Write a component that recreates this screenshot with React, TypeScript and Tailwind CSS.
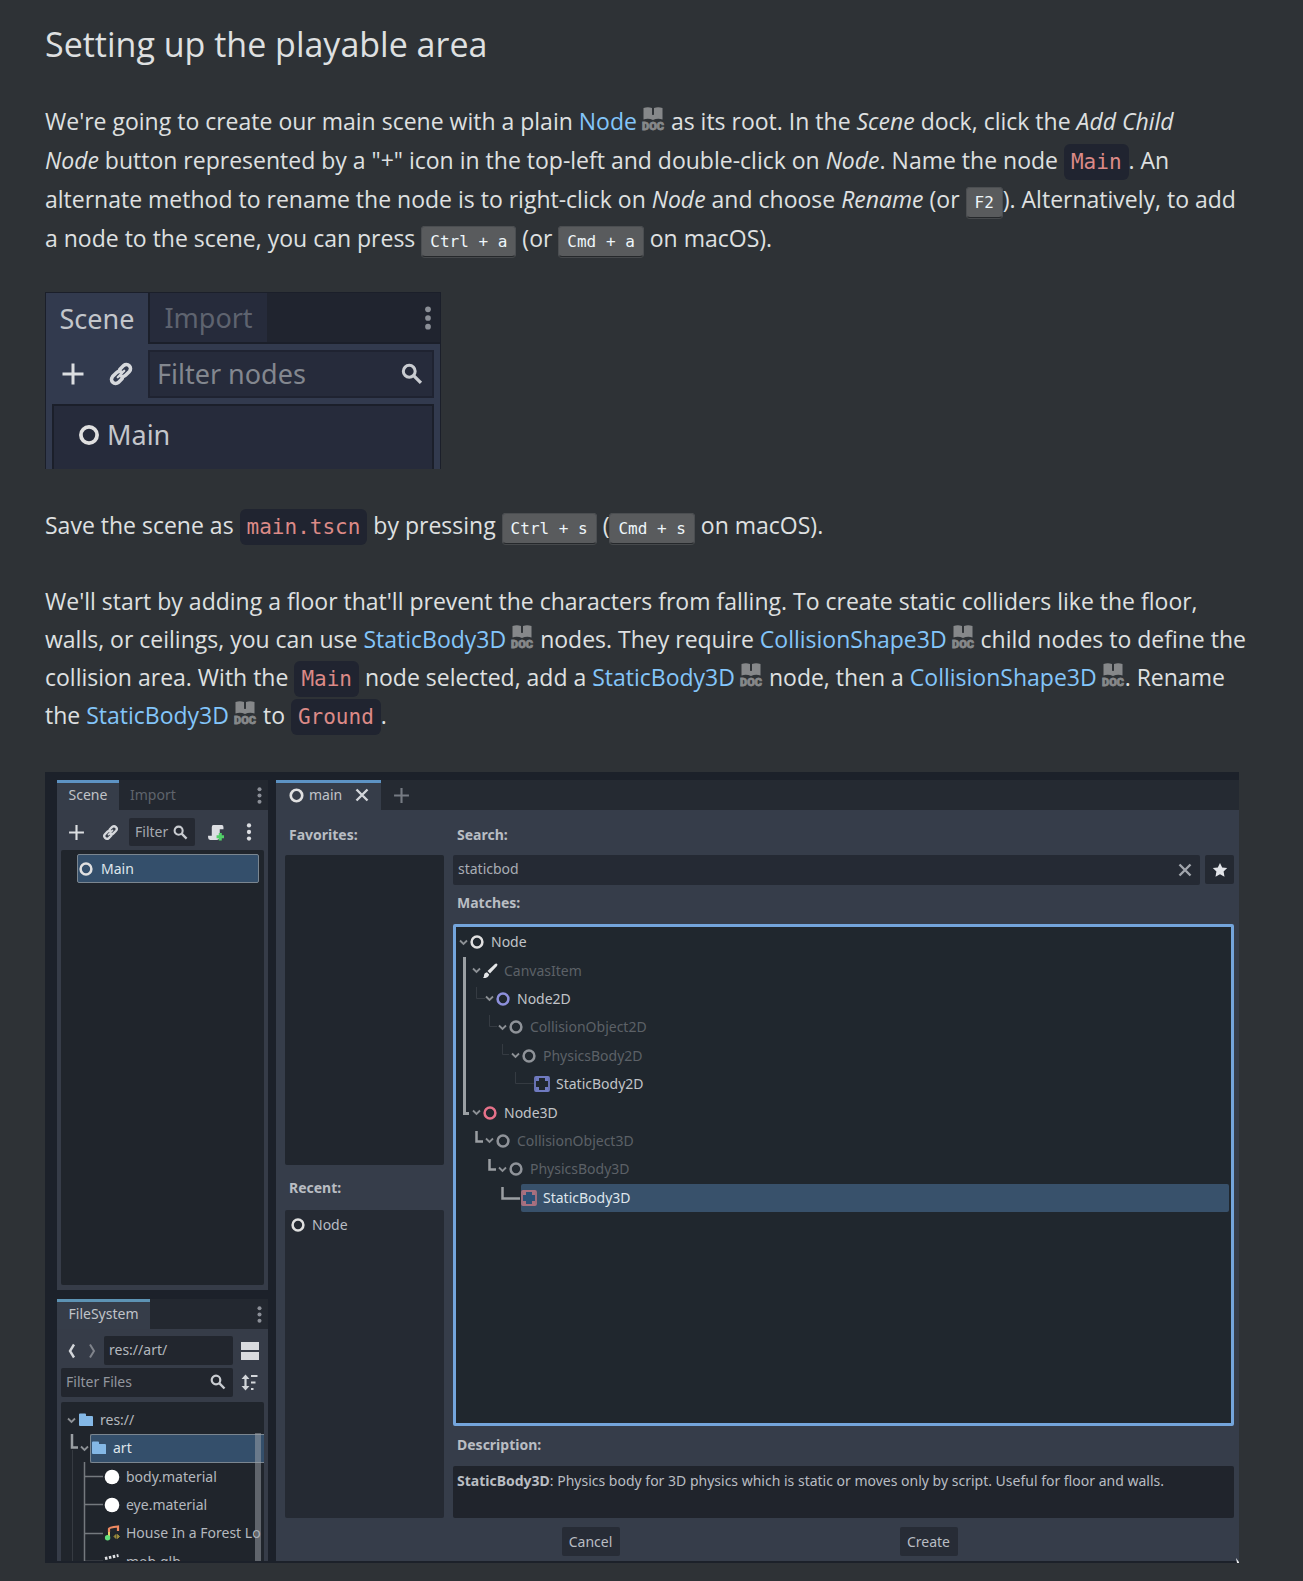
import React from "react";

const ui = 'font-["Noto_Sans","Open_Sans",sans-serif]';

function DocLink({ children }: { children: string }) {
  return (
    <a href="#" className="whitespace-nowrap text-[#83c5fa]">
      {children}
      <svg className="ml-1 inline-block h-[23px] w-[24px] overflow-visible align-baseline" viewBox="0 0 24 23" fill="#86888a" aria-hidden="true">
        <path d="M2.500 1Q7-.6 11 1V7.500Q12 8.500 13 7.500V1Q17-.6 21.500 1V12.500Q16.500 11 12 13Q7.500 11 2.500 12.500Z" />
        <text x="12" y="22.500" textAnchor="middle" fontSize="11" fontWeight="900" stroke="#86888a" strokeWidth=".8" className="font-[Roboto,sans-serif]">DOC</text>
      </svg>
    </a>
  );
}

function Code({ children }: { children: string }) {
  return (
    <code className='rounded-[6px] bg-[#202430] px-[7px] py-[6px] font-["DejaVu_Sans_Mono",monospace] text-[21px] leading-[20px] text-[#dc8a87]'>
      {children}
    </code>
  );
}

function Key({ children }: { children: string }) {
  return (
    <kbd className='rounded-[4px] border border-[#4b4e51] border-b-[#25282b] bg-[#595b5d] px-2 py-[5px] font-["DejaVu_Sans_Mono",monospace] text-[16px] leading-[20px] text-[#eef6fa] shadow-[0_1px_0_#46494c]'>
      {children}
    </kbd>
  );
}

function Ring({ size, color = "#e0e0e0" }: { size: number; color?: string }) {
  return (
    <svg width={size} height={size} viewBox="0 0 16 16" className="shrink-0" aria-hidden="true">
      <circle cx="8" cy="8" r="5.400" fill="none" stroke={color} strokeWidth="2.500" />
    </svg>
  );
}

function Plus({ size, color = "#dcdee1" }: { size: number; color?: string }) {
  return (
    <svg width={size} height={size} viewBox="0 0 16 16" aria-hidden="true">
      <path d="M8 1V15M1 8H15" stroke={color} strokeWidth="2" />
    </svg>
  );
}

function Link({ size }: { size: number }) {
  return (
    <svg width={size} height={size} viewBox="0 0 16 16" fill="none" aria-hidden="true">
      <g stroke="#d6d8dc" strokeWidth="2.200" strokeLinecap="round">
        <path d="M7.200 5.200L9.600 2.800A2.550 2.550 0 0 1 13.200 6.400L10.800 8.800A2.500 2.500 0 0 1 7.700 9.100" />
        <path d="M8.800 10.800L6.400 13.200A2.550 2.550 0 0 1 2.800 9.600L5.200 7.200A2.500 2.500 0 0 1 8.300 6.900" />
        <path d="M6 10L10 6" strokeWidth="1.400" />
      </g>
    </svg>
  );
}

function Search({ size }: { size: number }) {
  return (
    <svg width={size} height={size} viewBox="0 0 16 16" fill="none" className="shrink-0" aria-hidden="true">
      <circle cx="6" cy="6" r="4.300" stroke="#c9ccd1" strokeWidth="2.200" />
      <path d="M9.200 9.200L14.500 14.500" stroke="#c9ccd1" strokeWidth="2.400" />
    </svg>
  );
}

function Dots({ size, color = "#8b8f97" }: { size: number; color?: string }) {
  return (
    <svg width={size} height={size} viewBox="0 0 16 16" fill={color} aria-hidden="true">
      <circle cx="8" cy="2.200" r="1.900" />
      <circle cx="8" cy="8" r="1.900" />
      <circle cx="8" cy="13.800" r="1.900" />
    </svg>
  );
}

function Cross({ color }: { color: string }) {
  return (
    <svg width="14" height="14" viewBox="0 0 14 14" aria-hidden="true">
      <path d="M1.500 1.500L12.500 12.500M12.500 1.500L1.500 12.500" stroke={color} strokeWidth="2.400" />
    </svg>
  );
}

function Caret() {
  return (
    <svg width="9" height="7" viewBox="0 0 9 7" className="shrink-0" aria-hidden="true">
      <path d="M1 1.500L4.500 5L8 1.500" fill="none" stroke="#8c9095" strokeWidth="1.800" />
    </svg>
  );
}

function Brush() {
  return (
    <svg width="16" height="16" viewBox="0 0 16 16" className="shrink-0" aria-hidden="true">
      <path d="M13 1Q14.500 0 15.500 1.500L15 3L8 10.500L5.500 8Z" fill="#e4e6e8" />
      <path d="M5 9.200L7.200 11.400Q6.500 15 1 15Q2.200 13.800 2 12.500Q2.200 9.700 5 9.200Z" fill="#e4e6e8" />
    </svg>
  );
}

function Body({ color, fill }: { color: string; fill: string }) {
  return (
    <svg width="16" height="16" viewBox="0 0 16 16" className="shrink-0" aria-hidden="true">
      <rect x="1" y="1" width="14" height="14" rx="1" fill={fill} stroke={color} strokeWidth="1.800" />
      <path d="M2 2h3v3h-3zM11 2h3v3h-3zM2 11h3v3h-3zM11 11h3v3h-3z" fill={color} />
    </svg>
  );
}

function Folder() {
  return (
    <svg width="16" height="16" viewBox="0 0 16 16" className="shrink-0" aria-hidden="true">
      <path d="M1 2.500Q1 1.500 2 1.500H7Q8 1.500 8 2.500V4H14Q15 4 15 5V13.500Q15 14 14.500 14H2Q1 14 1 13Z" fill="#84b8e6" />
    </svg>
  );
}

function Material() {
  return (
    <svg width="16" height="16" viewBox="0 0 16 16" className="shrink-0" aria-hidden="true">
      <circle cx="8" cy="8" r="7.300" fill="#fff" />
    </svg>
  );
}

function Music() {
  return (
    <svg width="16" height="16" viewBox="0 0 16 16" className="shrink-0" fill="none" aria-hidden="true">
      <path d="M5 12.500V5" stroke="#e6cf6a" strokeWidth="2" />
      <path d="M5 7V3.500Q5 2.500 14 1.500V6" stroke="#ef8a62" strokeWidth="2.200" />
      <circle cx="3.600" cy="12.700" r="2.700" fill="#63e07c" />
      <path d="M10 11.500L12 9.500V13.500ZM15.500 11.500L13.500 9.500V13.500Z" fill="#9b8b3c" stroke="#9b8b3c" />
    </svg>
  );
}

function Clapper() {
  return (
    <svg width="16" height="16" viewBox="0 0 16 16" className="shrink-0" aria-hidden="true">
      <path d="M1 7H15V15H1Z" fill="#dfe1e4" />
      <path d="M1 4.500L14.500 1.500" stroke="#dfe1e4" strokeWidth="3" strokeDasharray="2.500 1.500" />
    </svg>
  );
}

function SceneDock() {
  return (
    <section className={`${ui} mt-[34px] flex h-[177px] w-[396px] flex-col overflow-hidden border border-b-0 border-[#1b1f2a] bg-[#323a4e] text-[27px] leading-[36px]`}>
      <div className="flex h-[51px] shrink-0 bg-[#20242f]">
        <button className="w-[104px] border-r-2 border-[#1b1f2a] bg-[#323a4e] text-[#c3c6cb]">Scene</button>
        <button className="w-[117px] border-b-2 border-[#1b1f2a] bg-[#262b3b] text-[#5e636f]">Import</button>
        <div className="flex flex-1 items-center justify-end border-b-2 border-[#1b1f2a]">
          <button aria-label="Dock options"><Dots size={24} /></button>
        </div>
      </div>
      <div className="flex h-[60px] shrink-0 items-center pr-[6px]">
        <button className="ml-[15px]" aria-label="Add node"><Plus size={24} /></button>
        <button className="ml-[23px]" aria-label="Instantiate scene"><Link size={26} /></button>
        <label className="ml-[14px] flex h-[48px] flex-1 items-center border-2 border-[#1f2331] bg-[#262b3b] pr-[9px] pl-[7px]">
          <input aria-label="Filter nodes" placeholder="Filter nodes" className="w-full min-w-0 bg-transparent outline-none placeholder:text-[#83878f]" />
          <Search size={22} />
        </label>
      </div>
      <div className="mr-[6px] ml-[6px] flex flex-1 items-start border-2 border-b-0 border-[#1b1f2a] bg-[#262b3b] pt-[11px] pl-[23px] text-[#c3c6cb]">
        <div className="flex items-center gap-[6px]"><Ring size={24} />Main</div>
      </div>
    </section>
  );
}

const matches: { name: string; level: number; icon: React.ReactNode; dim?: boolean; leaf?: boolean; selected?: boolean }[] = [
  { name: "Node", level: 0, icon: <Ring size={16} /> },
  { name: "CanvasItem", level: 1, icon: <Brush />, dim: true },
  { name: "Node2D", level: 2, icon: <Ring size={16} color="#8d90dc" /> },
  { name: "CollisionObject2D", level: 3, icon: <Ring size={16} color="#8f9399" />, dim: true },
  { name: "PhysicsBody2D", level: 4, icon: <Ring size={16} color="#8f9399" />, dim: true },
  { name: "StaticBody2D", level: 5, icon: <Body color="#6f7ac0" fill="#20272e" />, leaf: true },
  { name: "Node3D", level: 1, icon: <Ring size={16} color="#e6728a" /> },
  { name: "CollisionObject3D", level: 2, icon: <Ring size={16} color="#8f9399" />, dim: true },
  { name: "PhysicsBody3D", level: 3, icon: <Ring size={16} color="#8f9399" />, dim: true },
  { name: "StaticBody3D", level: 4, icon: <Body color="#a8707f" fill="#2c5278" />, leaf: true, selected: true },
];

function MatchTree() {
  return (
    <div className="relative mt-[11px] h-[502px] rounded-[2px] border-3 border-[#74a5dc] bg-[#20272e] pt-px pr-[2px]">
      <svg className="absolute top-0 left-0" width="80" height="290" fill="none" aria-hidden="true">
        <path d="M8.500 30V186.500H13" stroke="#9a9fa3" strokeWidth="3" />
        <path d="M20.500 204V214.500H27M33.500 232V242.500H40M46.500 260V271.500H64" stroke="#9a9fa3" strokeWidth="2.500" />
        <path d="M20.500 60V71.500H29M33.500 88V99.500H41M46.500 117V127.500H53M59.500 145V156.500H78" stroke="#353b42" strokeWidth="1" />
      </svg>
      <ul className="relative grid h-[284px] grid-rows-10">
        {matches.map((m) => (
          <li key={m.name} className="flex items-center" style={{ paddingLeft: 1 + m.level * 13 }}>
            <span className="flex w-[12px] shrink-0 justify-center">{!m.leaf && <Caret />}</span>
            <span
              className={
                m.selected
                  ? "flex h-full flex-1 items-center gap-[6px] rounded-[2px] bg-[#38516b] text-[#dfe6ec]"
                  : m.dim
                    ? "flex flex-1 items-center gap-[6px] text-[#5c6167]"
                    : "flex flex-1 items-center gap-[6px] text-[#c0c4c8]"
              }
            >
              {m.icon}
              {m.name}
            </span>
          </li>
        ))}
      </ul>
    </div>
  );
}

function LeftDocks() {
  return (
    <div className="flex w-[211px] shrink-0 flex-col">
      <div className="flex h-[30px] shrink-0 items-stretch bg-[#232830] text-[#c0c3c8]">
        <button className="w-[62px] border-t-3 border-[#5d93c4] bg-[#363d49] pb-[3px]">Scene</button>
        <button className="ml-[11px] text-[#5f646c]">Import</button>
        <button className="ml-auto" aria-label="Dock options"><Dots size={17} /></button>
      </div>
      <div className="flex h-[480px] shrink-0 flex-col bg-[#363c48] px-[4px] pb-[5px]">
        <div className="flex h-[40px] shrink-0 items-center pt-[4px]">
          <button className="ml-[7px]" aria-label="Add node"><Plus size={17} /></button>
          <button className="ml-[17px]" aria-label="Instantiate scene"><Link size={17} /></button>
          <label className="ml-[10px] flex h-[28px] w-[66px] items-center justify-between rounded-[2px] bg-[#252932] pr-[7px] pl-[6px]">
            <input aria-label="Filter" placeholder="Filter" className="w-[36px] bg-transparent outline-none placeholder:text-[#a5a9b0]" />
            <Search size={15} />
          </label>
          <button className="ml-[12px]" aria-label="Attach script">
            <svg width="17" height="17" viewBox="0 0 16 16" aria-hidden="true">
              <path d="M6 1H14Q15.500 1 15.500 3V5H12V11.500Q12 15 9 15H3Q1 15 1 12.500V11H4.500V3Q4.500 1 6 1Z" fill="#dcdee2" />
              <path d="M12.500 8.500V15.500M9 12H16" stroke="#52cf68" strokeWidth="2.800" />
            </svg>
          </button>
          <button className="ml-[16px]" aria-label="More options"><Dots size={18} color="#dcdee2" /></button>
        </div>
        <div className="flex-1 rounded-[2px] bg-[#20252c] pt-[4px] pr-[5px] pl-[16px]">
          <div className="flex h-[29px] items-center gap-[7px] rounded-[2px] border border-[#7b8690] bg-[#344f6b] text-[#dfe6ec]">
            <Ring size={16} />Main
          </div>
        </div>
      </div>

      <div className="mt-[9px] flex h-[30px] shrink-0 items-stretch bg-[#232830] text-[#c0c3c8]">
        <button className="w-[93px] border-t-3 border-[#5d93b4] bg-[#363d49] pb-[4px]">FileSystem</button>
        <button className="ml-auto" aria-label="Dock options"><Dots size={17} /></button>
      </div>
      <div className="flex min-h-0 flex-1 flex-col bg-[#363c48] px-[4px] pt-[7px]">
        <div className="flex h-[29px] shrink-0 items-center">
          <button className="ml-[6px]" aria-label="Back">
            <svg width="9" height="16" viewBox="0 0 9 16" aria-hidden="true"><path d="M7 1.500L3 8L7 14.500" fill="none" stroke="#d3d6da" strokeWidth="2.400" /></svg>
          </button>
          <button className="ml-[12px]" aria-label="Forward">
            <svg width="9" height="16" viewBox="0 0 9 16" aria-hidden="true"><path d="M2 1.500L6 8L2 14.500" fill="none" stroke="#80848c" strokeWidth="2" /></svg>
          </button>
          <input aria-label="Path" defaultValue="res://art/" className="ml-[7px] h-full w-[129px] rounded-[2px] bg-[#22262e] pb-[2px] pl-[5px] text-[#b4b8be] outline-none" />
          <button className="ml-[8px]" aria-label="Split mode">
            <svg width="18" height="18" viewBox="0 0 18 18" aria-hidden="true"><path d="M0 0H18V8H0ZM0 10H18V18H0Z" fill="#d9dbdf" /></svg>
          </button>
        </div>
        <div className="mt-[3px] flex h-[29px] shrink-0 items-center">
          <label className="flex h-full w-[172px] items-center justify-between rounded-[2px] bg-[#22262e] pr-[7px] pb-[2px] pl-[5px]">
            <input aria-label="Filter Files" placeholder="Filter Files" className="w-[120px] bg-transparent outline-none placeholder:text-[#92969e]" />
            <Search size={16} />
          </label>
          <button className="ml-[8px]" aria-label="Sort files">
            <svg width="17" height="17" viewBox="0 0 17 17" fill="none" stroke="#d3d6da" aria-hidden="true">
              <path d="M4.500 3V14" strokeWidth="2.200" />
              <path d="M0.500 5L4.500 0.500L8.500 5ZM0.500 12L4.500 16.500L8.500 12Z" fill="#d3d6da" stroke="none" />
              <path d="M10 2H16.500M10 8.500H14.500M10 15H12.500" strokeWidth="2" />
            </svg>
          </button>
        </div>
        <div className="relative mt-[5px] min-h-0 flex-1 overflow-hidden rounded-t-[2px] bg-[#20252c] pt-[4px]">
          <svg className="absolute top-0 left-0" width="48" height="164" fill="none" aria-hidden="true">
            <path d="M11 32V45.500H17" stroke="#9a9fa3" strokeWidth="2.500" />
            <path d="M11.500 48V164" stroke="#363b42" />
            <path d="M23.500 60V164M23.500 74.500H42M23.500 102.500H42M23.500 131.500H42M23.500 159.500H42" stroke="#74797e" strokeWidth="1.500" />
          </svg>
          <ul className="relative grid h-[170px] grid-rows-6 whitespace-nowrap text-[#b4b8be]">
            <li className="flex items-center pl-[6px]"><Caret /><span className="ml-[2px] flex items-center gap-[6px]"><Folder />res://</span></li>
            <li className="flex items-center pl-[19px]">
              <Caret />
              <span className="ml-px flex h-full flex-1 items-center gap-[6px] rounded-l-[2px] border border-r-0 border-[#7b8690] bg-[#344f6b] text-[#dfe6ec]"><Folder />art</span>
            </li>
            <li className="flex items-center gap-[6px] pl-[43px]"><Material />body.material</li>
            <li className="flex items-center gap-[6px] pl-[43px]"><Material />eye.material</li>
            <li className="flex items-center gap-[6px] pl-[43px]"><Music />House In a Forest Lo</li>
            <li className="flex items-center gap-[6px] pl-[43px]"><Clapper />mob.glb</li>
          </ul>
          <span className="absolute top-[31px] right-[3px] bottom-0 w-[6px] bg-[#a0a6ac]/50" />
        </div>
      </div>
    </div>
  );
}

function CreateDialog() {
  return (
    <div className="ml-[8px] flex min-w-0 flex-1 flex-col">
      <div className="flex h-[30px] shrink-0 bg-[#252a32] text-[#c0c3c8]">
        <div className="flex w-[105px] items-center border-t-3 border-[#5d93c4] bg-[#363d49] pb-[3px] pl-[12px]">
          <Ring size={17} />
          <span className="ml-[4px]">main</span>
          <button className="ml-[13px]" aria-label="Close tab"><Cross color="#d3d6da" /></button>
        </div>
        <button className="ml-[12px]" aria-label="New tab"><Plus size={17} color="#767b83" /></button>
      </div>
      <div className="flex flex-1 flex-col bg-[#363d4a] pr-[5px] pl-[9px] text-[#b9bdc3]">
        <div className="flex">
          <div className="flex w-[159px] shrink-0 flex-col">
            <h3 className="mt-[15px] pl-[4px] font-bold">Favorites:</h3>
            <div className="mt-[10px] h-[310px] rounded-[2px] bg-[#21262e]" />
            <h3 className="mt-[13px] pl-[4px] font-bold">Recent:</h3>
            <div className="mt-[12px] h-[308px] rounded-[2px] bg-[#252a33] pt-[5px] pl-[5px]">
              <div className="flex items-center gap-[6px]"><Ring size={16} />Node</div>
            </div>
          </div>
          <div className="ml-[9px] flex min-w-0 flex-1 flex-col">
            <label htmlFor="search" className="mt-[15px] pl-[4px] font-bold">Search:</label>
            <div className="mt-[10px] flex h-[30px] items-start gap-[5px]">
              <div className="flex h-full flex-1 items-center rounded-[2px] bg-[#252a34] pr-[8px] pl-[5px]">
                <input id="search" defaultValue="staticbod" className="min-w-0 flex-1 bg-transparent pb-[2px] text-[#a9adb4] outline-none" />
                <button aria-label="Clear"><Cross color="#a2a6ad" /></button>
              </div>
              <button className="flex h-[29px] w-[29px] items-center justify-center rounded-[2px] bg-[#242932]" aria-label="Favorite">
                <svg width="16" height="16" viewBox="0 0 16 16" aria-hidden="true">
                  <path d="M8 1L10.200 5.400L15.200 6.100L11.600 9.600L12.500 14.700L8 12.300L3.500 14.700L4.400 9.600L0.800 6.100L5.800 5.400Z" fill="#e2e4e8" />
                </svg>
              </button>
            </div>
            <h3 className="mt-[8px] pl-[4px] font-bold">Matches:</h3>
            <MatchTree />
            <h3 className="mt-[9px] pl-[4px] font-bold">Description:</h3>
            <p className="mt-[11px] h-[52px] rounded-[2px] bg-[#20242c] px-[4px] pt-[5px]">
              <b>StaticBody3D</b>: Physics body for 3D physics which is static or moves only by script. Useful for floor and walls.
            </p>
          </div>
        </div>
        <div className="mt-[9px] flex justify-center gap-[280px]">
          <button className="h-[29px] w-[58px] rounded-[2px] bg-[#272c36]">Cancel</button>
          <button className="h-[29px] w-[58px] rounded-[2px] bg-[#272c36]">Create</button>
        </div>
      </div>
    </div>
  );
}

export default function App() {
  return (
    <main className='min-h-screen bg-[#2e3236] px-[45px] pb-[18px] font-["Open_Sans","Noto_Sans",sans-serif] text-[23px] leading-[38px] text-[#dfe0e1]'>
      <h1 className="pt-[19px] text-[34px] leading-[50px]">Setting up the playable area</h1>
      <p className="mt-[33px] mr-[-10px] leading-[39px]">
        We're going to create our main scene with a plain <DocLink>Node</DocLink> as its root. In the <em>Scene</em> dock, click the <em>Add Child</em>
        <br />
        <em>Node</em> button represented by a "+" icon in the top-left and double-click on <em>Node</em>. Name the node <Code>Main</Code>. An
        <br />
        alternate method to rename the node is to right-click on <em>Node</em> and choose <em>Rename</em> (or <Key>F2</Key>). Alternatively, to add
        <br />
        a node to the scene, you can press <Key>Ctrl + a</Key> (or <Key>Cmd + a</Key> on macOS).
      </p>
      <SceneDock />
      <p className="mt-[37px]">
        Save the scene as <Code>main.tscn</Code> by pressing <Key>Ctrl + s</Key> (<Key>Cmd + s</Key> on macOS).
      </p>
      <p className="mt-[38px] mr-[-10px]">
        We'll start by adding a floor that'll prevent the characters from falling. To create static colliders like the floor,
        <br />
        walls, or ceilings, you can use <DocLink>StaticBody3D</DocLink> nodes. They require <DocLink>CollisionShape3D</DocLink> child nodes to define the
        <br />
        collision area. With the <Code>Main</Code> node selected, add a <DocLink>StaticBody3D</DocLink> node, then a <DocLink>CollisionShape3D</DocLink>. Rename
        <br />
        the <DocLink>StaticBody3D</DocLink> to <Code>Ground</Code>.
      </p>
      <section className={`${ui} relative mt-[38px] mr-[19px] flex h-[791px] overflow-hidden bg-[#1c212a] pt-[8px] pb-[2px] pl-[12px] text-[14px] leading-[20px]`}>
        <LeftDocks />
        <CreateDialog />
        <svg className="absolute right-0 bottom-0" width="3" height="5" aria-hidden="true"><path d="M0 0L3 4V5H1Z" fill="#e8eaec" /></svg>
      </section>
    </main>
  );
}
